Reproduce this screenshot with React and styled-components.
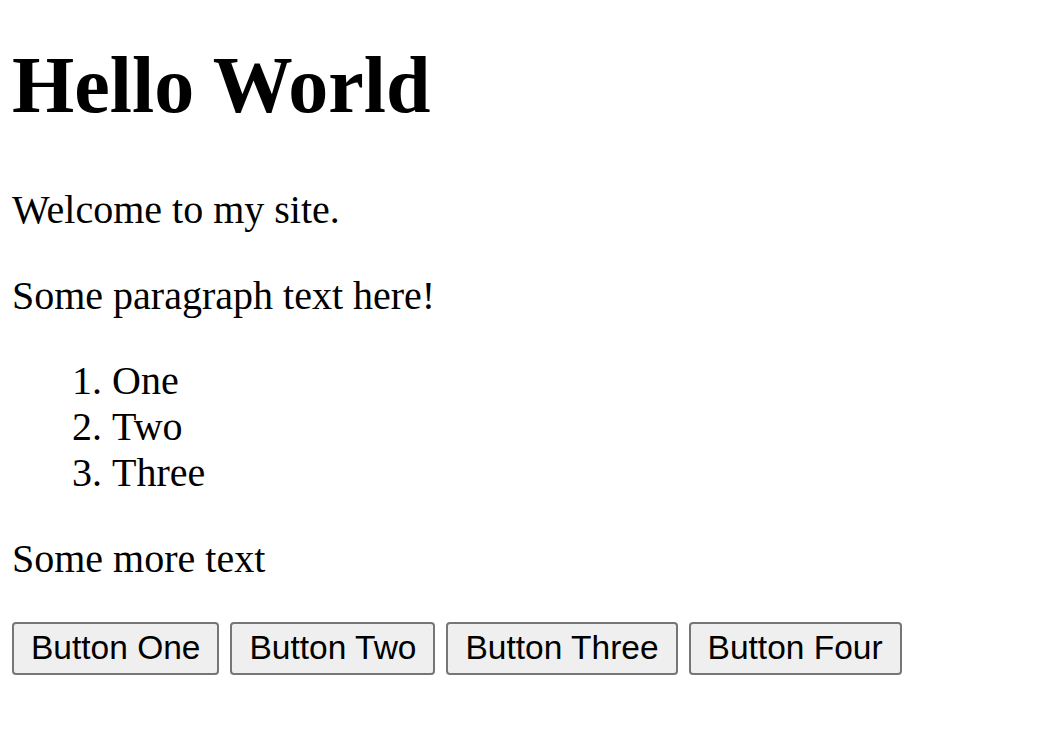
import React from "react";
import styled, { createGlobalStyle } from "styled-components";

const GlobalStyle = createGlobalStyle`
  body {
    margin: 0;
    background: #ffffff;
    color: #000000;
    font-family: "Liberation Serif", "Times New Roman", serif;
  }
`;

const Page = styled.div`
  padding: 0 12px;
  font-size: 40px;
  line-height: 46px;
`;

const Title = styled.h1`
  font-size: 80px;
  line-height: 92px;
  font-weight: 700;
  margin: 39px 0 56px;
`;

const Text = styled.p`
  margin: 39.5px 0;
`;

const List = styled.ol`
  margin: 39.5px 0;
  padding-left: 100px;
`;

const ButtonRow = styled.div`
  display: flex;
  gap: 11px;
  margin-top: 40px;
`;

const Button = styled.button`
  font-family: "Liberation Sans", Arial, sans-serif;
  font-size: 33.5px;
  line-height: normal;
  color: #000000;
  background: #efefef;
  border: 2px solid #767676;
  border-radius: 4px;
  padding: 5px 17px;
  height: 53px;
`;

const App = () => {
  return (
    <>
      <GlobalStyle />
      <Page>
        <Title>Hello World</Title>
        <Text>Welcome to my site.</Text>
        <Text>Some paragraph text here!</Text>
        <List>
          <li>One</li>
          <li>Two</li>
          <li>Three</li>
        </List>
        <Text>Some more text</Text>
        <ButtonRow>
          <Button>Button One</Button>
          <Button>Button Two</Button>
          <Button>Button Three</Button>
          <Button>Button Four</Button>
        </ButtonRow>
      </Page>
    </>
  );
};

export default App;
